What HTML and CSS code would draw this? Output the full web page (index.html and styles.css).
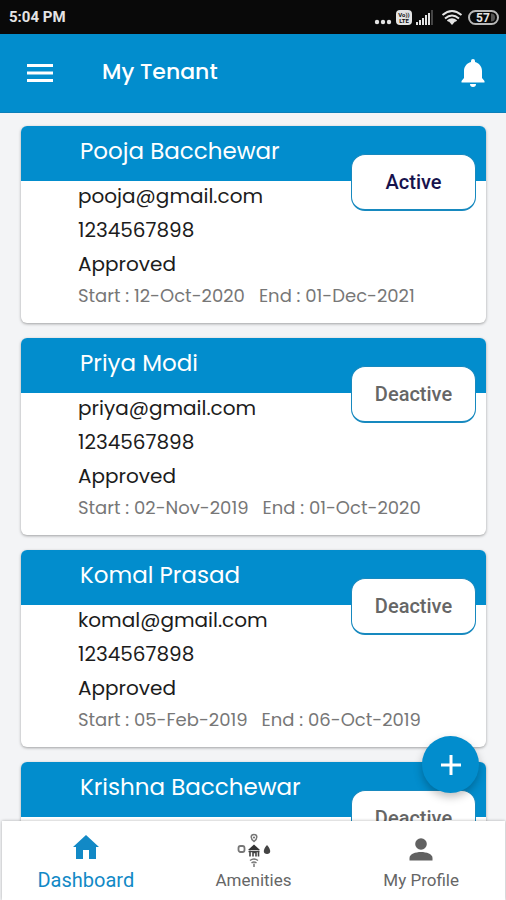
FILE: index.html
```html
<!DOCTYPE html>
<html lang="en">
<head>
<meta charset="utf-8">
<meta name="viewport" content="width=device-width, initial-scale=1">
<title>My Tenant</title>
<link rel="stylesheet" href="styles.css">
</head>
<body>
<div class="app">
  <div class="status">
    <span class="time">5:04 PM</span>
    <svg class="status-icons" width="126" height="20" viewBox="0 0 126 20" aria-hidden="true">
      <g fill="#e4e4e4">
        <circle cx="3" cy="15" r="2.200"/><circle cx="9" cy="15" r="2.200"/><circle cx="15" cy="15" r="2.200"/>
        <rect x="22" y="3" width="16" height="15" rx="4"/>
        <rect x="42" y="15" width="2" height="3"/><rect x="45" y="13" width="2" height="5"/><rect x="48" y="11" width="2" height="7"/><rect x="51" y="8" width="2" height="10"/><rect x="54" y="6" width="2" height="12"/>
        <rect x="57" y="3" width="2" height="15" fill="#444"/>
        <path d="M74.500 14l3.500 4 3.500-4a5 5 0 0 0-7 0z"/>
      </g>
      <g fill="none" stroke="#e4e4e4" stroke-width="2">
        <path d="M68.500 8q9.500-8 19 0M71 11.500q7-6 14 0M73.500 14q4.500-3.500 9 0"/>
        <rect x="95" y="4" width="29" height="13" rx="6.500" stroke="#b8b8b8"/>
      </g>
      <path d="M117 6.500a4 4 0 0 1 0 8z" fill="#555"/>
      <text x="30" y="10" class="volte">Vo))</text>
      <text x="30" y="16" class="volte">LTE</text>
      <text x="109" y="15" class="level">57</text>
    </svg>
  </div>
  <header class="bar">
    <button class="icon-button" aria-label="Menu">
      <svg width="28" height="20" viewBox="0 0 28 20"><path d="M1 2.500h26M1 10h26M1 17.500h26" stroke="#fff" stroke-width="3"/></svg>
    </button>
    <h1>My Tenant</h1>
    <button class="icon-button" aria-label="Notifications">
      <svg width="24" height="30" viewBox="0 0 24 30" fill="#fff"><path d="M12 1a2 2 0 0 1 2 2v1c4 1 7 4.500 7 9v7l2.500 3v1.500H.5V23L3 20v-7c0-4.500 3-8 7-9V3a2 2 0 0 1 2-2zM9 26h6a3 3 0 0 1-6 0z"/></svg>
    </button>
  </header>
  <main class="list">
    <article class="card">
      <h2>Pooja Bacchewar</h2>
      <button class="state active">Active</button>
      <div class="details"><p>pooja@gmail.com</p><p>1234567898</p><p>Approved</p><p class="dates"><span>Start : 12-Oct-2020</span><span>End : 01-Dec-2021</span></p></div>
    </article>
    <article class="card">
      <h2>Priya Modi</h2>
      <button class="state">Deactive</button>
      <div class="details"><p>priya@gmail.com</p><p>1234567898</p><p>Approved</p><p class="dates"><span>Start : 02-Nov-2019</span><span>End : 01-Oct-2020</span></p></div>
    </article>
    <article class="card">
      <h2>Komal Prasad</h2>
      <button class="state">Deactive</button>
      <div class="details"><p>komal@gmail.com</p><p>1234567898</p><p>Approved</p><p class="dates"><span>Start : 05-Feb-2019</span><span>End : 06-Oct-2019</span></p></div>
    </article>
    <article class="card">
      <h2>Krishna Bacchewar</h2>
      <button class="state">Deactive</button>
    </article>
  </main>
  <nav class="tabs">
    <button class="fab" aria-label="Add tenant"><svg width="22" height="22" viewBox="0 0 22 22"><path d="M11 1v20M1 11h20" stroke="#fff" stroke-width="3"/></svg></button>
    <a class="tab current" href="#dashboard">
      <svg width="28" height="28" viewBox="0 0 28 28" fill="currentColor"><path d="M14 2L1 14h3v12h7v-9h6v9h7V14h3z"/></svg>
      <span>Dashboard</span>
    </a>
    <a class="tab" href="#amenities">
      <svg width="36" height="35" viewBox="0 0 36 35" fill="none" stroke="#555">
        <path d="M18 8.500c-4-3-3.500-7 0-7s4 4 0 7z" stroke="#777" stroke-width="1.500"/><circle cx="18" cy="4.500" r="1" fill="#666" stroke="none"/>
        <rect x="2.500" y="13" width="6" height="6" rx="2" stroke="#777" stroke-width="1.800"/>
        <path d="M12 17l6-5.500 6 5.500z" fill="#333" stroke="none"/>
        <path d="M14 17.500v6M17 23.500v-4h3v4M22.500 17.500v6M12.500 18.500h11" stroke="#444" stroke-width="1.600"/>
        <path d="M31 12c4.500 5 4 9 0 9s-4.500-4 0-9z" fill="#444" stroke="none"/>
        <path d="M14 27.500q4-3 8 0M15.500 30q2.500-2 5 0M18 30.500v3.500" stroke="#777" stroke-width="1.500"/>
      </svg>
      <span>Amenities</span>
    </a>
    <a class="tab" href="#profile">
      <svg width="28" height="30" viewBox="0 0 28 30" fill="#616161"><circle cx="14" cy="11" r="5.800"/><path d="M2.500 27.500v-2.500c0-4 6-6 11.500-6s11.500 2 11.500 6v2.500z"/></svg>
      <span>My Profile</span>
    </a>
  </nav>
</div>
</body>
</html>
```
FILE: styles.css
```css
* { box-sizing: border-box; }
body {
  margin: 0;
  background: #f3f4f6;
  font-family: Poppins, Inter, sans-serif;
  color: #1c1c1c;
}
h1, h2, p { margin: 0; font-weight: 400; }
button { font: inherit; border: 0; padding: 0; background: none; }
svg { display: block; flex: none; }
.app { height: 100vh; display: flex; flex-direction: column; }

.status {
  height: 34px;
  flex: none;
  display: flex;
  align-items: center;
  justify-content: space-between;
  padding: 0 6px 0 9px;
  background: #090909;
}
.time { font: 700 15px Roboto, sans-serif; color: #e4e4e4; }
.volte { font: 700 6px Roboto, sans-serif; fill: #111; text-anchor: middle; }
.level { font: 700 12px Roboto, sans-serif; fill: #e4e4e4; text-anchor: middle; }

.bar {
  height: 79px;
  flex: none;
  display: flex;
  align-items: center;
  padding: 0 21px 0 26px;
  background: #028dcd;
  border-bottom: 1px solid #0b7fb9;
}
.bar h1 {
  flex: 1;
  padding: 0 0 3px 48px;
  font-size: 22px;
  line-height: 28px;
  font-weight: 500;
  color: #fff;
}

.list {
  flex: 1;
  min-height: 0;
  overflow: hidden;
  display: flex;
  flex-direction: column;
  gap: 15px;
  padding: 13px 20px 0 21px;
}
.card {
  position: relative;
  flex: none;
  background: #fff;
  border-radius: 6px;
  box-shadow: 0 1px 3px rgba(0, 0, 0, .35);
}
.card h2 {
  height: 55px;
  padding: 9px 59px;
  border-radius: 6px 6px 0 0;
  background: #028dcd;
  color: #fff;
  font-size: 23px;
  line-height: 32px;
}
.card:last-child { padding-bottom: 140px; }
.state {
  position: absolute;
  top: 28px;
  right: 10px;
  width: 125px;
  height: 57px;
  border: 1px solid #1789bf;
  border-bottom-width: 2px;
  border-radius: 14px;
  background: #fff;
  font: 500 20px Roboto, sans-serif;
  color: #666;
}
.state.active { color: #17134d; }
.details {
  margin-top: -2px;
  padding: 0 57px 12px;
  font-size: 20px;
  line-height: 34px;
}
.details .dates {
  display: flex;
  gap: 14px;
  font-size: 18px;
  line-height: 30px;
  color: #777;
  white-space: nowrap;
}

.tabs {
  position: relative;
  flex: none;
  height: 79px;
  margin: 0 1px 0 2px;
  display: flex;
  background: #fff;
  box-shadow: 0 0 3px rgba(0, 0, 0, .3);
}
.tab {
  flex: 1;
  display: flex;
  flex-direction: column;
  align-items: center;
  justify-content: space-between;
  padding: 12px 0 8px;
  font: 400 17px/24px Roboto, sans-serif;
  color: #666;
  text-decoration: none;
}
.tab.current { color: #1289c6; font-size: 20px; }
.fab {
  position: absolute;
  right: 26px;
  bottom: 107px;
  width: 57px;
  height: 57px;
  display: flex;
  align-items: center;
  justify-content: center;
  border-radius: 50%;
  background: #028dcd;
  box-shadow: 0 4px 8px rgba(0, 0, 0, .25);
}
```
